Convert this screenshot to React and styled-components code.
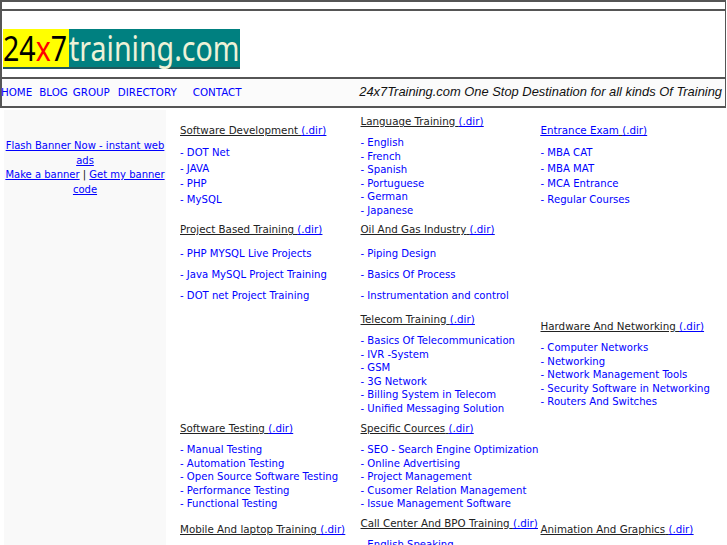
import React from 'react';
import styled, { createGlobalStyle } from 'styled-components';

const GlobalStyle = createGlobalStyle`
  html, body {
    margin: 0;
    padding: 0;
    height: 545px;
    overflow: hidden;
    background: #fff;
    font-family: "DejaVu Sans", sans-serif;
  }
  a {
    color: #0000ff;
    text-decoration: none;
  }
`;

const Page = styled.div`
  width: 727px;
  height: 545px;
  overflow: hidden;
`;

const Header = styled.header`
  width: 726px;
  box-sizing: border-box;
  border: 2px solid #555;
  border-right-width: 1px;
`;

const TopStrip = styled.div`
  height: 7px;
  border-bottom: 2px solid #555;
`;

const LogoRow = styled.div`
  height: 68px;
  box-sizing: border-box;
  padding: 18px 0 0 1px;
  border-bottom: 2px solid #555;
`;

const Logo = styled.div`
  display: flex;
  width: 237px;
  height: 40px;
  font-family: "Noto Sans", sans-serif;
  font-size: 34px;
  line-height: 38px;
  border-bottom: 2px solid #22575a;
  box-sizing: border-box;
`;

const LogoYellow = styled.div`
  flex: 0 0 66px;
  min-width: 0;
  background: #ffff00;
  color: #000;
  white-space: nowrap;
  span { color: #ff0000; }
`;

const LogoTeal = styled.div`
  flex: 1;
  min-width: 0;
  background: #008080;
  color: #eef2d8;
  white-space: nowrap;
`;

const Squeezed = styled.div`
  transform: scaleX(0.84);
  transform-origin: left center;
`;

const NavRow = styled.nav`
  height: 27px;
  box-sizing: border-box;
  padding-bottom: 2px;
  display: flex;
  align-items: center;
  background: #fbfbfb;
  font-size: 10.3px;
`;

const NavLink = styled.a`
  margin-left: ${p => p.$gap}px;
`;

const Tagline = styled.div`
  margin-left: auto;
  padding-right: 3px;
  font-family: "Liberation Sans", sans-serif;
  font-style: italic;
  font-size: 12.9px;
  color: #111;
  white-space: nowrap;
`;

const Main = styled.main`
  margin-top: 2px;
  display: grid;
  grid-template-columns: 180px 180.5px 180px 180px;
  grid-template-rows: 111px 91px 107px 97px 30px;
`;

const Sidebar = styled.aside`
  grid-row: 1 / 6;
  width: 162px;
  margin-left: 4px;
  padding-top: 29px;
  height: 440px;
  box-sizing: border-box;
  background: #f9f9f9;
  text-align: center;
  font-size: 10px;
  line-height: 14.6px;
  color: #111;
  a { text-decoration: underline; }
`;

const Group = styled.section`
  padding-top: ${p => p.$top}px;
  white-space: nowrap;
`;

const Heading = styled.h3`
  margin: 0 0 ${p => p.$gap}px;
  font-weight: normal;
  font-size: 10.3px;
  line-height: 14px;
  color: #222;
  text-decoration: underline;
  a { text-decoration: underline; }
`;

const Items = styled.ul`
  margin: 0;
  padding: 0;
  list-style: none;
  font-size: 10.1px;
  line-height: ${p => p.$line}px;
  color: #0000ff;
`;

const data = [
  { col: 2, row: 1, top: 13, gap: 8, line: 15.7, title: 'Software Development', items: ['DOT Net', 'JAVA', 'PHP', 'MySQL'] },
  { col: 3, row: 1, top: 4, gap: 8, line: 13.6, title: 'Language Training', items: ['English', 'French', 'Spanish', 'Portuguese', 'German', 'Japanese'] },
  { col: 4, row: 1, top: 13, gap: 8, line: 15.7, title: 'Entrance Exam', items: ['MBA CAT', 'MBA MAT', 'MCA Entrance', 'Regular Courses'], linked: true },
  { col: 2, row: 2, top: 1, gap: 8, line: 20.8, title: 'Project Based Training', items: ['PHP MYSQL Live Projects', 'Java MySQL Project Training', 'DOT net Project Training'] },
  { col: 3, row: 2, top: 1, gap: 8, line: 20.8, title: 'Oil And Gas Industry', items: ['Piping Design', 'Basics Of Process', 'Instrumentation and control'] },
  { col: 3, row: 3, top: 0, gap: 8, line: 13.6, title: 'Telecom Training', items: ['Basics Of Telecommunication', 'IVR -System', 'GSM', '3G Network', 'Billing System in Telecom', 'Unified Messaging Solution'] },
  { col: 4, row: 3, top: 7, gap: 8, line: 13.6, title: 'Hardware And Networking', items: ['Computer Networks', 'Networking', 'Network Management Tools', 'Security Software in Networking', 'Routers And Switches'] },
  { col: 2, row: 4, top: 2, gap: 8, line: 13.6, title: 'Software Testing', items: ['Manual Testing', 'Automation Testing', 'Open Source Software Testing', 'Performance Testing', 'Functional Testing'] },
  { col: 3, row: 4, top: 2, gap: 8, line: 13.6, title: 'Specific Cources', items: ['SEO - Search Engine Optimization', 'Online Advertising', 'Project Management', 'Cusomer Relation Management', 'Issue Management Software'] },
  { col: 2, row: 5, top: 6, gap: 7, line: 13.6, title: 'Mobile And laptop Training', items: [] },
  { col: 3, row: 5, top: 0, gap: 8, line: 13.6, title: 'Call Center And BPO Training', items: ['English Speaking'] },
  { col: 4, row: 5, top: 6, gap: 7, line: 13.6, title: 'Animation And Graphics', items: [] },
];

export default function App() {
  return (
    <Page>
      <GlobalStyle />
      <Header>
        <TopStrip />
        <LogoRow>
          <Logo>
            <LogoYellow><Squeezed>24<span>x</span>7</Squeezed></LogoYellow>
            <LogoTeal><Squeezed>training.com</Squeezed></LogoTeal>
          </Logo>
        </LogoRow>
        <NavRow>
          <NavLink $gap={-1} href="#">HOME</NavLink>
          <NavLink $gap={7} href="#">BLOG</NavLink>
          <NavLink $gap={5} href="#">GROUP</NavLink>
          <NavLink $gap={8} href="#">DIRECTORY</NavLink>
          <NavLink $gap={16} href="#">CONTACT</NavLink>
          <Tagline>24x7Training.com One Stop Destination for all kinds Of Training</Tagline>
        </NavRow>
      </Header>
      <Main>
        <Sidebar>
          <a href="#">Flash Banner Now - instant web ads</a>
          <br />
          <a href="#">Make a banner</a> | <a href="#">Get my banner code</a>
        </Sidebar>
        {data.map(g => (
          <Group key={g.title} $top={g.top} style={{ gridColumn: g.col, gridRow: g.row }}>
            <Heading $gap={g.gap}>
              {g.linked ? <a href="#">{g.title}</a> : g.title} <a href="#">(.dir)</a>
            </Heading>
            <Items $line={g.line}>
              {g.items.map(item => (
                <li key={item}><a href="#">- {item}</a></li>
              ))}
            </Items>
          </Group>
        ))}
      </Main>
    </Page>
  );
}
